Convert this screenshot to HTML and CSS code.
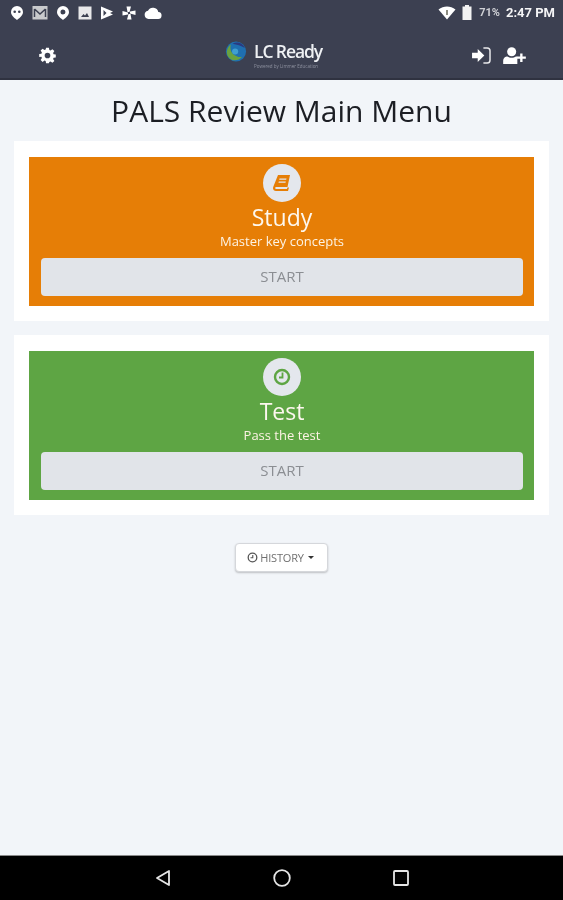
FILE: index.html
```html
<!DOCTYPE html>
<html lang="en">
<head>
<meta charset="utf-8">
<title>PALS Review Main Menu</title>
<link rel="stylesheet" href="styles.css">
</head>
<body>
<div class="screen">
  <header class="appbar">
    <div class="status">
      <div class="status-icons">
        <svg class="si" viewBox="0 0 14 16"><path fill="#fff" fill-rule="evenodd" d="M7 1a6 6 0 0 1 6 6c0 3.400-2.800 5.400-6 8-3.200-2.600-6-4.600-6-8a6 6 0 0 1 6-6zM4.700 5.500a1.300 1.300 0 1 0 0 2.600 1.300 1.300 0 0 0 0-2.600zm4.600 0a1.300 1.300 0 1 0 0 2.600 1.300 1.300 0 0 0 0-2.600z"/></svg>
        <svg class="si si-wide" viewBox="0 0 16 16"><rect x="0.500" y="1" width="15" height="13.500" fill="#c9cacd"/><path fill="none" stroke="#3c4051" stroke-width="1.500" d="M2.500 4v8M13.500 4v8M2.500 4L8 9l5.500-5"/></svg>
        <svg class="si" viewBox="0 0 14 16"><path fill="#fff" fill-rule="evenodd" d="M7 1a6 6 0 0 1 6 6c0 3.400-2.800 5.400-6 8-3.200-2.600-6-4.600-6-8a6 6 0 0 1 6-6zM7 4.500a2.500 2.500 0 1 0 0 5 2.500 2.500 0 0 0 0-5z"/></svg>
        <svg class="si" viewBox="0 0 14 16"><rect x="0.500" y="1.500" width="13" height="13" fill="#e8e8ea"/><path fill="#3c4051" d="M3 12l2.500-3 1.500 1.500L9 8l2 4z"/></svg>
        <svg class="si" viewBox="0 0 14 16"><path fill="#fff" d="M1 1.500l12 5-3 1.500 3 1.500-12 5z"/><path fill="#3c4051" d="M3.500 5l3 3-3 3z"/></svg>
        <svg class="si" viewBox="0 0 14 16"><path fill="#fff" d="M4.500 1.500h4.500L7.500 7H5.500zM13.500 5.500v4.500L8 8.500V6.500zM9.500 14.500H5L6.500 9h2zM.5 10.500V6L6 7.500v2z"/></svg>
        <svg class="si si-cloud" viewBox="0 0 18 14"><path fill="#fff" d="M14.300 6A5.500 5.500 0 0 0 4 4.700 4.200 4.200 0 0 0 4.500 13h9.300a3.500 3.500 0 0 0 .5-7z"/></svg>
      </div>
      <div class="status-right">
        <svg class="wifi" viewBox="0 0 18 14"><path fill="#fff" d="M9 13.500L0.500 3.500C3 1.500 6 .5 9 .5s6 1 8.500 3z"/><rect x="8" y="4" width="2" height="5" fill="#8c8c80"/></svg>
        <svg class="battery" viewBox="0 0 10 15"><path fill="#f2f2f2" d="M3 0h4v1.500h2.500V15H.5V1.500H3z"/></svg>
        <span class="percent">71%</span>
        <span class="clock">2:47 PM</span>
      </div>
    </div>
    <div class="toolbar">
      <svg class="gear" viewBox="0 0 24 24"><path fill="#fff" fill-rule="evenodd" d="M10 1h4l.6 3.100 1.700.7 2.600-1.800 2.800 2.800-1.800 2.600.7 1.700 3.100.6v4l-3.100.6-.7 1.700 1.800 2.600-2.800 2.800-2.600-1.800-1.700.7L14 23h-4l-.6-3.100-1.700-.7-2.600 1.800-2.800-2.800 1.800-2.600-.7-1.700L.3 14v-4l3.100-.6.7-1.700L2.300 5.100l2.800-2.800 2.600 1.800 1.700-.7zM12 8a4 4 0 1 0 0 8 4 4 0 0 0 0-8z"/></svg>
      <div class="logo">
        <svg class="globe" viewBox="0 0 24 24">
          <circle cx="12" cy="12" r="11.500" fill="#1f6fb0"/>
          <path fill="#6aa23f" d="M3 18c-3-5-1-11 3-14-1 5 0 9 4 12 3 2 6 3 9 2-4 5-12 6-16 0z"/>
          <path fill="#2a3a80" d="M8 3c5-3 12-1 14 5-4-3-9-4-14-5z"/>
          <circle cx="11" cy="12" r="3.500" fill="#3f9fd0"/>
        </svg>
        <div class="logo-text">
          <span class="logo-name">LC Ready</span>
          <span class="logo-sub">Powered by Limmer Education</span>
        </div>
      </div>
      <div class="toolbar-right">
        <svg class="signin" viewBox="0 0 20 18"><path fill="#fff" d="M0 6h6V2l7 7-7 7v-4H0z"/><path fill="none" stroke="#e8e8ea" stroke-width="1.600" d="M12 1h4a3 3 0 0 1 3 3v10a3 3 0 0 1-3 3h-4"/></svg>
        <svg class="adduser" viewBox="0 0 24 18"><circle cx="9" cy="5" r="4.800" fill="#fff"/><path fill="#fff" d="M0 18v-3c0-3.500 2.500-5 4.500-5 1.300 1 2.800 1.500 4.500 1.500s3.200-.5 4.500-1.500c.5 0 1 .1 1.500.3V18z"/><path fill="#fff" d="M18 7h2.500v3H24v2.500h-3.500V16H18v-3.500h-3.500V10H18z"/></svg>
      </div>
    </div>
  </header>

  <main class="content">
    <h1 class="title">PALS Review Main Menu</h1>

    <section class="card">
      <div class="panel panel-orange">
        <div class="badge">
          <svg class="badge-icon" viewBox="0 0 18 18"><path fill="#e67e06" fill-rule="evenodd" d="M5 1h12l-2.500 12H3.500c-1 0-1.300.6-1.300 1s.3 1 1.300 1H14l.4-1.500H16L15 17H3C1.300 17 0 15.800 0 14.300c0-.5.100-1 .3-1.500zM6.500 4.500l-.3 1.300h7l.3-1.300zM5.800 7.500l-.3 1.300h7l.3-1.300z"/></svg>
        </div>
        <h2 class="panel-title">Study</h2>
        <p class="panel-sub">Master key concepts</p>
        <button class="start" type="button">START</button>
      </div>
    </section>

    <section class="card">
      <div class="panel panel-green">
        <div class="badge">
          <svg class="badge-icon" viewBox="0 0 18 18"><circle cx="9" cy="9" r="7" fill="none" stroke="#5ea544" stroke-width="2.400"/><path fill="none" stroke="#5ea544" stroke-width="1.800" d="M9.500 4.500v5H6"/></svg>
        </div>
        <h2 class="panel-title">Test</h2>
        <p class="panel-sub">Pass the test</p>
        <button class="start" type="button">START</button>
      </div>
    </section>

    <div class="history-row">
      <button class="history" type="button">
        <svg class="history-icon" viewBox="0 0 12 12"><circle cx="6" cy="6" r="4.700" fill="none" stroke="#555" stroke-width="1.400"/><path fill="none" stroke="#555" stroke-width="1.200" d="M6.300 3.200v3.100H3.800"/></svg>
        <span>HISTORY</span>
        <span class="caret"></span>
      </button>
    </div>
  </main>

  <footer class="navbar">
    <svg class="nav-icon" viewBox="0 0 18 18"><path fill="none" stroke="#e6e6e6" stroke-width="1.800" stroke-linejoin="round" d="M15 2v14L3 9z"/></svg>
    <svg class="nav-icon" viewBox="0 0 18 18"><circle cx="9" cy="9" r="7.800" fill="none" stroke="#e6e6e6" stroke-width="1.800"/></svg>
    <svg class="nav-icon" viewBox="0 0 18 18"><rect x="2" y="2" width="14" height="14" rx="1" fill="none" stroke="#e6e6e6" stroke-width="1.800"/></svg>
  </footer>
</div>
</body>
</html>
```
FILE: styles.css
```css
* { box-sizing: border-box; }
html, body { margin: 0; padding: 0; }
body { font-family: "Open Sans", "Noto Sans", sans-serif; background: #f2f5f9; }

.screen {
  width: 563px;
  height: 900px;
  display: flex;
  flex-direction: column;
  overflow: hidden;
  filter: blur(0.6px);
}

.appbar {
  height: 80px;
  flex: none;
  background: #3c4051;
  border-bottom: 2px solid #2f3240;
  display: flex;
  flex-direction: column;
}

.status {
  height: 25px;
  flex: none;
  display: flex;
  align-items: center;
  justify-content: space-between;
  padding: 0 8px 0 10px;
}
.status-icons { display: flex; align-items: center; gap: 8px; }
.si { width: 14px; height: 16px; display: block; }
.si-wide { width: 16px; }
.si-cloud { width: 18px; height: 14px; }
.status-right { display: flex; align-items: center; color: #fff; }
.wifi { width: 18px; height: 14px; display: block; margin-right: 6px; }
.battery { width: 10px; height: 15px; display: block; margin-right: 7px; }
.percent { font: 700 11px "Roboto", sans-serif; color: #cfd0d5; margin-right: 6px; }
.clock { font: 700 13px "Roboto", sans-serif; color: #f4f4f6; }

.toolbar {
  flex: 1;
  display: flex;
  align-items: center;
  justify-content: space-between;
  position: relative;
  padding: 7px 37px 0 39px;
}
.gear { width: 17px; height: 17px; display: block; }
.logo {
  position: absolute;
  left: 225px;
  top: 16px;
  display: flex;
  align-items: flex-start;
  gap: 7px;
}
.globe { width: 22px; height: 21px; display: block; }
.logo-text { display: flex; flex-direction: column; align-items: flex-start; }
.logo-name { font-size: 17.500px; line-height: 21px; font-weight: 600; color: #eef0f3; letter-spacing: -1.100px; }
.logo-sub { font-size: 4.500px; line-height: 6px; color: #8f92a0; white-space: nowrap; margin-top: 1px; }
.toolbar-right { display: flex; align-items: center; gap: 12px; }
.signin { width: 19px; height: 17px; display: block; }
.adduser { width: 23px; height: 17px; display: block; }

.content { flex: 1; padding: 0 14px; display: flex; flex-direction: column; }
.title {
  margin: 13px 0 12px;
  font-size: 30px;
  line-height: 36px;
  font-weight: 400;
  color: #1c1e24;
  text-align: center;
}
.card {
  background: #fff;
  padding: 16px 15px 15px;
  height: 180px;
  margin-bottom: 14px;
}
.panel {
  height: 149px;
  padding: 7px 11px 0 12px;
  display: flex;
  flex-direction: column;
  align-items: center;
  color: #fff;
}
.panel-orange { background: #e67e06; }
.panel-green { background: #5ea544; }
.badge {
  width: 38px;
  height: 38px;
  flex: none;
  border-radius: 50%;
  background: #e4e7ed;
  display: flex;
  align-items: center;
  justify-content: center;
}
.badge-icon { width: 18px; height: 18px; display: block; }
.panel-title {
  margin: 1px 0 0;
  font-size: 23px;
  line-height: 28px;
  font-weight: 400;
  color: #fdf7ee;
}
.panel-sub {
  margin: 2px 0 0;
  font-size: 13px;
  line-height: 17px;
  color: #fdf3e4;
}
.start {
  margin-top: 8px;
  width: 100%;
  height: 38px;
  flex: none;
  border: 0;
  border-radius: 4px;
  padding: 0 0 2px;
  background: #e1e4e9;
  color: #8b8e93;
  font-family: inherit;
  font-size: 15px;
}

.history-row { display: flex; justify-content: center; margin-top: 14px; }
.history {
  width: 93px;
  height: 29px;
  display: flex;
  align-items: center;
  justify-content: center;
  gap: 2px;
  padding: 0 2px 0 0;
  background: #fff;
  border: 1px solid #d5d7db;
  border-radius: 4px;
  box-shadow: 0 1px 2px rgba(0,0,0,0.22);
  color: #707070;
  font-family: inherit;
  font-size: 11px;
  letter-spacing: -0.2px;
}
.history-icon { width: 11px; height: 11px; display: block; }
.caret {
  width: 0;
  height: 0;
  margin-left: 2px;
  border-left: 3.500px solid transparent;
  border-right: 3.500px solid transparent;
  border-top: 3.500px solid #333;
}

.navbar {
  height: 45px;
  flex: none;
  background: #000;
  border-top: 1px solid #8a8a8a;
  display: flex;
  align-items: center;
  justify-content: center;
  gap: 101px;
}
.nav-icon { width: 18px; height: 18px; display: block; }
```
